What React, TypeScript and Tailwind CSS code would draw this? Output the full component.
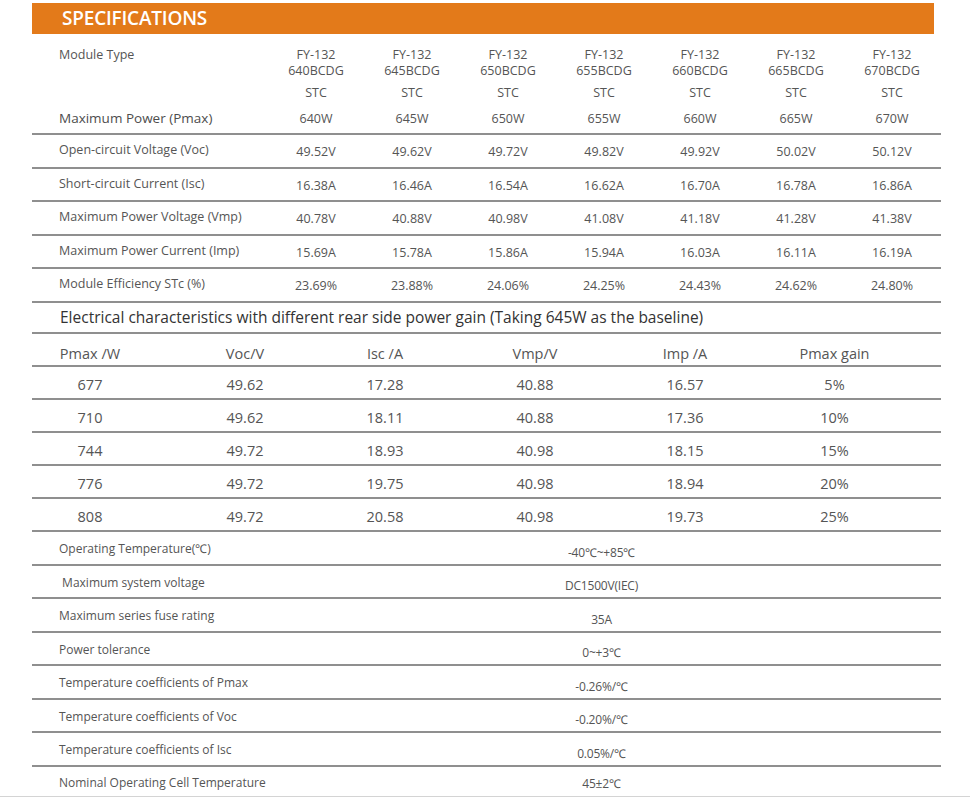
const models = ['640', '645', '650', '655', '660', '665', '670'];

const specRows: [string, string[]][] = [
  ['Open-circuit Voltage (Voc)', ['49.52V', '49.62V', '49.72V', '49.82V', '49.92V', '50.02V', '50.12V']],
  ['Short-circuit Current (Isc)', ['16.38A', '16.46A', '16.54A', '16.62A', '16.70A', '16.78A', '16.86A']],
  ['Maximum Power Voltage (Vmp)', ['40.78V', '40.88V', '40.98V', '41.08V', '41.18V', '41.28V', '41.38V']],
  ['Maximum Power Current (Imp)', ['15.69A', '15.78A', '15.86A', '15.94A', '16.03A', '16.11A', '16.19A']],
  ['Module Efficiency STc (%)', ['23.69%', '23.88%', '24.06%', '24.25%', '24.43%', '24.62%', '24.80%']],
];

const gainHead = ['Pmax /W', 'Voc/V', 'Isc /A', 'Vmp/V', 'Imp /A', 'Pmax gain'];
const gainRows = [
  ['677', '49.62', '17.28', '40.88', '16.57', '5%'],
  ['710', '49.62', '18.11', '40.88', '17.36', '10%'],
  ['744', '49.72', '18.93', '40.98', '18.15', '15%'],
  ['776', '49.72', '19.75', '40.98', '18.94', '20%'],
  ['808', '49.72', '20.58', '40.98', '19.73', '25%'],
];

const otherRows = [
  ['Operating Temperature(℃)', '-40℃~+85℃'],
  [' Maximum system voltage', 'DC1500V(IEC)'],
  ['Maximum series fuse rating', '35A'],
  ['Power tolerance', '0~+3℃'],
  ['Temperature coefficients of Pmax', '-0.26%/℃'],
  ['Temperature coefficients of Voc', '-0.20%/℃'],
  ['Temperature coefficients of Isc', '0.05%/℃'],
];

const specGrid = 'grid grid-cols-[236px_repeat(7,96px)]';
const gainGrid = 'grid grid-cols-[116px_194px_86px_214px_86px_1fr]';

export default function App() {
  return (
    <div className="min-h-[801px] bg-white pt-[3px] font-['Open_Sans',sans-serif] text-[#555]">
      <div className="ml-[32px] flex h-[31px] w-[902px] items-center bg-[#e37a1a] pl-[30px]">
        <h1 className="text-[19px] font-semibold tracking-[-0.2px] text-white">SPECIFICATIONS</h1>
      </div>

      <div className="ml-[32px] w-[909px]">
        {/* module header */}
        <div className="border-b-2 border-[#8f8f8f]">
          <div className={`${specGrid} h-[48px] pt-[13px] text-[12.5px] leading-[16px]`}>
            <div className="pl-[27px]">Module Type</div>
            {models.map((m) => (
              <div key={m} className="text-center">
                <div>FY-132</div>
                <div>{m}BCDG</div>
              </div>
            ))}
          </div>
          <div className={`${specGrid} h-[22px] items-center pt-[1px] text-[12.5px]`}>
            <div />
            {models.map((m) => (
              <div key={m} className="text-center">STC</div>
            ))}
          </div>
          <div className={`${specGrid} h-[29px] items-center`}>
            <div className="pl-[27px] text-[13.5px] text-[#4d4d4d]">Maximum Power (Pmax)</div>
            {models.map((m) => (
              <div key={m} className="pt-[1px] text-center text-[12.5px]">{m}W</div>
            ))}
          </div>
        </div>

        {specRows.map(([label, vals]) => (
          <div key={label} className={`${specGrid} h-[33.6px] items-center border-b-2 border-[#8f8f8f] text-[12.5px]`}>
            <div className="pb-[1px] pl-[27px]">{label}</div>
            {vals.map((v, i) => (
              <div key={i} className="pt-[3px] text-center">{v}</div>
            ))}
          </div>
        ))}

        {/* rear side gain */}
        <div className="flex h-[31px] items-center border-b-2 border-[#8f8f8f] pl-[28px] text-[15.5px] text-[#333]">
          Electrical characteristics with different rear side power gain (Taking 645W as the baseline)
        </div>
        <div className={`${gainGrid} h-[33.2px] items-center border-b-2 border-[#8f8f8f] pt-[9px] text-[14.5px]`}>
          {gainHead.map((h) => (
            <div key={h} className="text-center">{h}</div>
          ))}
        </div>
        {gainRows.map((r) => (
          <div key={r[0]} className={`${gainGrid} h-[33px] items-center border-b-2 border-[#8f8f8f] pt-[5px] text-[14.5px]`}>
            {r.map((c, i) => (
              <div key={i} className="text-center">{c}</div>
            ))}
          </div>
        ))}

        {/* general */}
        {otherRows.map(([label, val]) => (
          <div key={label} className="grid h-[33.5px] grid-cols-[236px_1fr] items-center border-b-2 border-[#8f8f8f] text-[12px]">
            <div className="whitespace-pre pl-[27px] pt-[3px]">{label}</div>
            <div className="pr-[6px] pt-[10px] text-center tracking-[-0.2px]">{val}</div>
          </div>
        ))}
        <div className="grid h-[29px] grid-cols-[236px_1fr] items-center text-[12px]">
          <div className="pl-[27px] pt-[4px]">Nominal Operating Cell Temperature</div>
          <div className="pr-[6px] pt-[6px] text-center tracking-[-0.2px]">45±2℃</div>
        </div>
      </div>
      <div className="h-[1px] w-full bg-[#d4d4d4]" />
    </div>
  );
}
